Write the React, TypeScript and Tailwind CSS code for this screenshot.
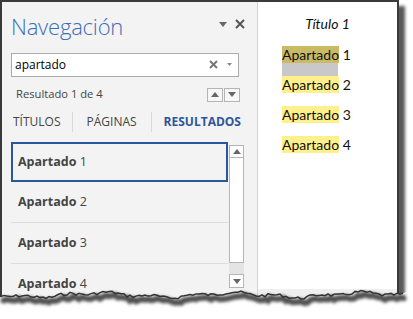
import { useMemo } from "react";

const items = ["1", "2", "3", "4"];

function TornEdge() {
  // jagged bottom line of the clipped screenshot
  const line = useMemo(() => {
    let seed = 7;
    const rnd = () => {
      seed = (seed * 9301 + 49297) % 233280;
      return seed / 233280;
    };
    const pts: string[] = [];
    for (let x = -2; x <= 404; x += 3) {
      const y =
        11 +
        2 * Math.sin(x / 21) +
        1.2 * Math.sin(x / 6.7 + 1) +
        (rnd() - 0.5) * 3;
      pts.push(`${x},${y.toFixed(1)}`);
    }
    return pts;
  }, []);

  const d = "M" + line.join(" L");

  return (
    <svg
      className="absolute left-0 top-[284px]"
      width="413"
      height="35"
      viewBox="0 0 413 35"
    >
      <defs>
        <filter id="blur" x="-5%" y="-100%" width="110%" height="300%">
          <feGaussianBlur stdDeviation="1.8" />
        </filter>
      </defs>
      <path d={`${d} L413,6 L413,35 L-2,35 Z`} fill="#ffffff" />
      <path
        d={d}
        transform="translate(3,4)"
        fill="none"
        stroke="#333"
        strokeWidth="6"
        opacity="0.85"
        filter="url(#blur)"
      />
      <path d={d} fill="none" stroke="#333" strokeWidth="1.5" />
    </svg>
  );
}

function Tri({ up = false }: { up?: boolean }) {
  return (
    <svg width="8" height="5" viewBox="0 0 8 5">
      <path d={up ? "M0,5 L4,0 L8,5 Z" : "M0,0 L8,0 L4,5 Z"} fill="#666" />
    </svg>
  );
}

export default function App() {
  return (
    <div className="relative h-[319px] w-[413px] overflow-hidden bg-white">
      <div className="flex h-[305px] w-[399px] border-l-2 border-r-2 border-t-2 border-[#3a3a3a] shadow-[6px_6px_3px_rgba(0,0,0,0.65)]">
        {/* navigation pane */}
        <div className="flex w-[256px] flex-col border-r border-[#d4d4d4] bg-[#f3f3f3] font-['Open_Sans',sans-serif] text-[#444]">
          <div className="flex h-[50px] items-start justify-between pl-[9px] pr-[12px] pt-[9px]">
            <span className="text-[22px] font-light leading-[30px] tracking-[-0.2px] text-[#3b6fb6]">
              Navegación
            </span>
            <div className="mt-[8px] flex items-center gap-[8px]">
              <Tri />
              <svg width="10" height="10" viewBox="0 0 10 10">
                <path d="M1,1 L9,9 M9,1 L1,9" stroke="#555" strokeWidth="2" />
              </svg>
            </div>
          </div>

          <div className="ml-[9px] mt-[2px] flex h-[24px] w-[228px] items-center border border-[#ababab] bg-white pl-[3px] pr-[6px]">
            <span className="flex-1 text-[12px] text-black">apartado</span>
            <svg width="9" height="9" viewBox="0 0 9 9">
              <path d="M1,1 L8,8 M8,1 L1,8" stroke="#777" strokeWidth="2" />
            </svg>
            <span className="ml-[9px] flex">
              <svg width="5" height="3" viewBox="0 0 5 3">
                <path d="M0,0 L5,0 L2.5,3 Z" fill="#888" />
              </svg>
            </span>
          </div>

          <div className="ml-[14px] mr-[17px] mt-[11px] flex h-[14px] items-center justify-between">
            <span className="text-[11.2px]">Resultado 1 de 4</span>
            <div className="flex gap-[1px]">
              <div className="flex h-[14px] w-[16px] items-center justify-center border border-[#b5b5b5] bg-[#f7f7f7]">
                <Tri up />
              </div>
              <div className="flex h-[14px] w-[16px] items-center justify-center border border-[#b5b5b5] bg-[#f7f7f7]">
                <Tri />
              </div>
            </div>
          </div>

          <div className="mt-[10px] flex h-[21px] items-center text-[12px]">
            <span className="pl-[11px] pr-[11px]">TÍTULOS</span>
            <span className="h-[20px] w-px bg-[#d8d8d8]" />
            <span className="pl-[14px] pr-[14px]">PÁGINAS</span>
            <span className="h-[20px] w-px bg-[#d8d8d8]" />
            <span className="pl-[12px] font-bold text-[#2b579a]">RESULTADOS</span>
          </div>

          <div className="ml-[9px] mt-[10px] flex">
            <div className="w-[217px]">
              {items.map((n, i) => (
                <div
                  key={n}
                  className={
                    i === 0
                      ? "flex h-[40px] items-center border-2 border-[#2b579a] pl-[5px] text-[12.5px]"
                      : "flex h-[41px] items-center border-b border-[#dcdcdc] pl-[7px] text-[12.5px]"
                  }
                >
                  <span className="font-bold">Apartado</span>
                  <span>&nbsp;{n}</span>
                </div>
              ))}
            </div>
            <div className="ml-[1px] mt-[3px] flex w-[15px] flex-col">
              <div className="flex h-[13px] items-center justify-center border border-[#b5b5b5] bg-white">
                <Tri up />
              </div>
              <div className="h-[105px] border border-t-0 border-[#b5b5b5] bg-white" />
              <div className="h-[11px] bg-[#e4e4e4]" />
              <div className="flex h-[14px] items-center justify-center border border-[#b5b5b5] bg-white">
                <Tri />
              </div>
            </div>
          </div>
        </div>

        {/* document */}
        <div className="flex flex-1 flex-col bg-white font-['Lato',sans-serif] text-[14px] text-[#111]">
          <div className="mt-[13px] text-center italic leading-[18px]">Título 1</div>
          <div className="mt-[13px] flex flex-col pl-[24px]">
            <div className="leading-[17px]">
              <span className="bg-[#c9ba66]">Apartado</span> 1
            </div>
            <div className="h-[13px] w-[56px] bg-[#c8c8c8]" />
            <div className="leading-[18px]">
              <span className="bg-[#fff08c]">Apartado</span> 2
            </div>
            <div className="mt-[12px] leading-[18px]">
              <span className="bg-[#fff08c]">Apartado</span> 3
            </div>
            <div className="mt-[12px] leading-[18px]">
              <span className="bg-[#fff08c]">Apartado</span> 4
            </div>
          </div>
          <div className="mt-auto h-[16px] bg-[#efefef]" />
        </div>
      </div>
      <TornEdge />
    </div>
  );
}
